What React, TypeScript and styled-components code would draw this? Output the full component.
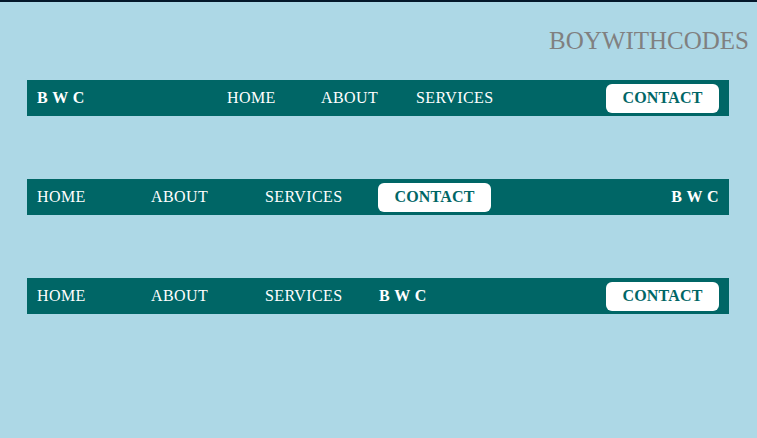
import styled, { createGlobalStyle } from "styled-components";

const GlobalStyle = createGlobalStyle`
  html {
    border-top: 2px solid #04182a;
    background: #add8e6;
  }
  body {
    margin: 0;
    background: #add8e6;
    font-family: "Liberation Serif", "Times New Roman", serif;
  }
`;

const Page = styled.div`
  display: flex;
  flex-direction: column;
  padding: 0 28px 0 27px;
`;

const Title = styled.h1`
  margin: 24px -20px 0 0;
  text-align: right;
  font-size: 25px;
  font-weight: 400;
  line-height: 30px;
  color: #808080;
`;

const Bar = styled.nav<{ $top: number }>`
  display: flex;
  align-items: center;
  height: 36px;
  margin-top: ${(p) => p.$top}px;
  padding: 0 10px;
  background: #006666;
  color: #ffffff;
  font-size: 16px;
`;

const Logo = styled.span<{ $width?: number; $push?: boolean }>`
  font-weight: 700;
  letter-spacing: 0.4px;
  white-space: pre;
  width: ${(p) => (p.$width ? `${p.$width}px` : "auto")};
  margin-left: ${(p) => (p.$push ? "auto" : "0")};
`;

const Link = styled.a<{ $width?: number }>`
  color: #ffffff;
  text-decoration: none;
  text-transform: uppercase;
  letter-spacing: 0.4px;
  width: ${(p) => (p.$width ? `${p.$width}px` : "auto")};
`;

const Contact = styled.button<{ $push?: boolean }>`
  display: flex;
  align-items: center;
  justify-content: center;
  width: 113px;
  height: 29px;
  margin-left: ${(p) => (p.$push ? "auto" : "0")};
  padding: 0;
  border: none;
  border-radius: 6px;
  background: #ffffff;
  color: #006666;
  font-family: inherit;
  font-size: 16px;
  font-weight: 700;
  letter-spacing: 0.2px;
`;

export default function App() {
  return (
    <>
      <GlobalStyle />
      <Page>
        <Title>BOYWITHCODES</Title>

        <Bar $top={24}>
          <Logo $width={190}>B W C</Logo>
          <Link $width={94}>Home</Link>
          <Link $width={95}>About</Link>
          <Link>Services</Link>
          <Contact $push>CONTACT</Contact>
        </Bar>

        <Bar $top={63}>
          <Link $width={114}>Home</Link>
          <Link $width={114}>About</Link>
          <Link $width={113}>Services</Link>
          <Contact>CONTACT</Contact>
          <Logo $push>B W C</Logo>
        </Bar>

        <Bar $top={63}>
          <Link $width={114}>Home</Link>
          <Link $width={114}>About</Link>
          <Link $width={114}>Services</Link>
          <Logo>B W C</Logo>
          <Contact $push>CONTACT</Contact>
        </Bar>
      </Page>
    </>
  );
}
